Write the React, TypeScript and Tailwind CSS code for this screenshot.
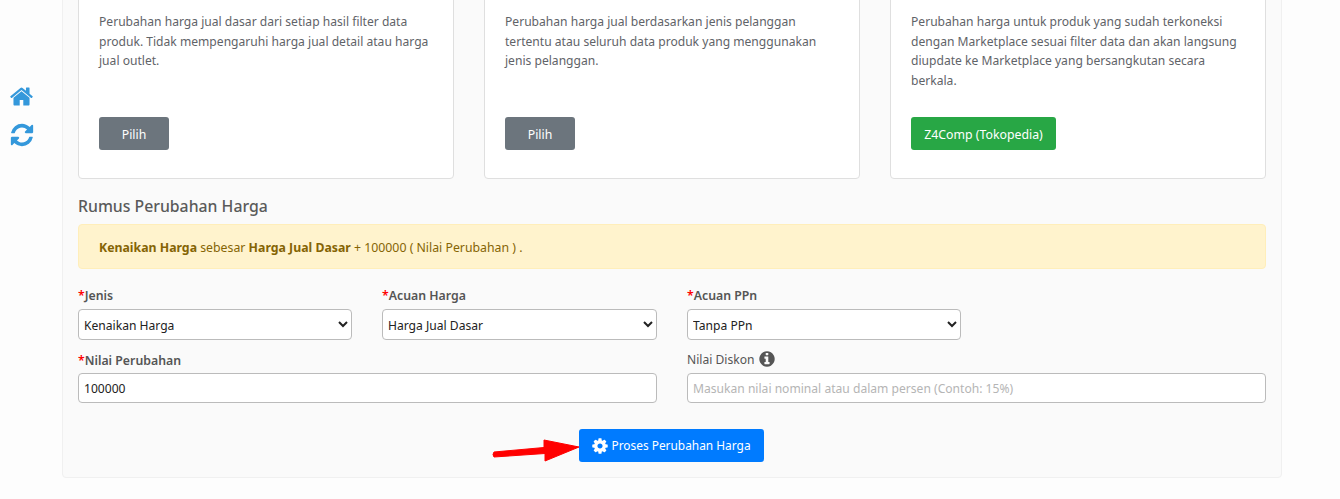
import React from "react";

const font = "font-['Noto_Sans',sans-serif]";

function Home() {
  return (
    <svg width="25" height="25" viewBox="0 0 1792 1792" fill="currentColor">
      <path d="M1472 992v480q0 26-19 45t-45 19h-384v-384h-256v384h-384q-26 0-45-19t-19-45v-480q0-1 .5-3t.5-3l575-474 575 474q1 2 1 6zm223-69l-62 74q-8 9-21 11h-3q-13 0-21-7l-692-577-692 577q-12 8-24 7-13-2-21-11l-62-74q-8-10-7-23.500t11-21.500l719-599q32-26 76-26t76 26l244 204v-195q0-14 9-23t23-9h192q14 0 23 9t9 23v408l219 182q10 8 11 21.500t-7 23.500z" />
    </svg>
  );
}

function Refresh() {
  return (
    <svg width="26" height="26" viewBox="0 0 1792 1792" fill="currentColor">
      <path d="M1639 1056q0 5-1 7-64 268-268 434.500t-478 166.500q-146 0-282.500-55t-243.500-157l-129 129q-19 19-45 19t-45-19-19-45v-448q0-26 19-45t45-19h448q26 0 45 19t19 45-19 45l-137 137q71 66 161 102t187 36q134 0 250-65t186-179q11-17 53-117 8-23 30-23h192q13 0 22.500 9.500t9.500 22.500zm25-800v448q0 26-19 45t-45 19h-448q-26 0-45-19t-19-45 19-45l138-138q-148-137-349-137-134 0-250 65t-186 179q-11 17-53 117-8 23-30 23h-199q-13 0-22.500-9.500t-9.500-22.500v-7q65-268 270-434.500t480-166.500q146 0 284 55.500t245 156.500l130-129q19-19 45-19t45 19 19 45z" />
    </svg>
  );
}

function Cog() {
  return (
    <svg width="18" height="18" viewBox="0 0 1792 1792" fill="currentColor">
      <path d="M1152 896q0-106-75-181t-181-75-181 75-75 181 75 181 181 75 181-75 75-181zm512-109v222q0 12-8 23t-20 13l-185 28q-19 54-39 91 35 50 107 138 10 12 10 25t-9 23q-27 37-99 108t-94 71q-12 0-26-9l-138-108q-44 23-91 38-16 136-29 186-7 28-36 28h-222q-14 0-24.500-8.500t-11.500-21.500l-28-184q-49-16-90-37l-141 107q-10 9-25 9-14 0-25-11-126-114-165-168-7-10-7-23 0-12 8-23 15-21 51-66.500t54-70.500q-27-50-41-99l-183-27q-13-2-21-12.500t-8-23.500v-222q0-12 8-23t19-13l186-28q14-46 39-92-40-57-107-138-10-12-10-24 0-10 9-23 26-36 98.500-107.500t94.500-71.500q13 0 26 10l138 107q44-23 91-38 16-136 29-186 7-28 36-28h222q14 0 24.500 8.500t11.500 21.500l28 184q49 16 90 37l142-107q9-9 24-9 13 0 25 10 129 119 165 170 7 8 7 22 0 12-8 23-15 21-51 66.500t-54 70.500q26 50 41 98l183 28q13 2 21 12.500t8 23.500z" />
    </svg>
  );
}

function Info() {
  return (
    <svg width="18" height="18" viewBox="0 0 1792 1792" fill="currentColor">
      <path d="M1152 1376v-160q0-14-9-23t-23-9h-96v-512q0-14-9-23t-23-9h-320q-14 0-23 9t-9 23v160q0 14 9 23t23 9h96v320h-96q-14 0-23 9t-9 23v160q0 14 9 23t23 9h448q14 0 23-9t9-23zm-128-896v-160q0-14-9-23t-23-9h-192q-14 0-23 9t-9 23v160q0 14 9 23t23 9h192q14 0 23-9t9-23zm640 416q0 209-103 385.500t-279.500 279.500-385.500 103-385.500-103-279.500-279.500-103-385.500 103-385.500 279.500-279.500 385.500-103 385.500 103 279.500 279.500 103 385.500z" />
    </svg>
  );
}

function Card({ text, btn, green }: { text: string; btn: string; green?: boolean }) {
  return (
    <div className="flex h-[188px] flex-col rounded-[4px] border border-[#dfdfdf] bg-white px-5 pt-5">
      <p className="h-[85px] text-[12.1px] leading-[19.5px] text-[#5f6368]">{text}</p>
      <div className="mt-[20px]">
        <button
          className={
            green
              ? "h-[33px] w-[145px] rounded-[3px] bg-[#28a745] pt-[3px] text-[12.3px] text-white"
              : "h-[33px] w-[70px] rounded-[3px] bg-[#6c757d] pt-[3px] text-[12.3px] text-white"
          }
        >
          {btn}
        </button>
      </div>
    </div>
  );
}

function Label({ text, extra }: { text: string; extra: string }) {
  return (
    <label className={`block h-[21px] text-[12.3px] font-semibold leading-[21px] text-[#555] ${extra}`}>
      <span className="text-[#ff0000]">*</span>
      {text}
    </label>
  );
}

function Sel({ value }: { value: string }) {
  return (
    <select
      defaultValue={value}
      className="h-[31px] w-full rounded-[4px] border border-[#bbb] bg-white px-[1px] pt-[1px] text-[12.1px] text-[#222]"
    >
      <option>{value}</option>
    </select>
  );
}

export default function App() {
  return (
    <div className={`flex h-[499px] w-[1340px] overflow-hidden bg-[#fdfdfd] ${font}`}>
      <div className="flex w-[62px] shrink-0 flex-col items-start gap-[13px] pl-[9px] pt-[84px] text-[#3498db]">
        <Home />
        <Refresh />
      </div>
      <div className="-mt-[20px] h-[498px] w-[1220px] shrink-0 rounded-[4px] border border-[#f0f0f0] bg-[#fafafa] px-[15px] pt-[10px]">
        <div className="grid grid-cols-3 gap-[30px]">
          <Card
            text="Perubahan harga jual dasar dari setiap hasil filter data produk. Tidak mempengaruhi harga jual detail atau harga jual outlet."
            btn="Pilih"
          />
          <Card
            text="Perubahan harga jual berdasarkan jenis pelanggan tertentu atau seluruh data produk yang menggunakan jenis pelanggan."
            btn="Pilih"
          />
          <Card
            text="Perubahan harga untuk produk yang sudah terkoneksi dengan Marketplace sesuai filter data dan akan langsung diupdate ke Marketplace yang bersangkutan secara berkala."
            btn="Z4Comp (Tokopedia)"
            green
          />
        </div>
        <h5 className="mt-[15px] h-[30px] text-[15.8px] font-medium leading-[24px] text-[#5a5a5a]">
          Rumus Perubahan Harga
        </h5>
        <div className="flex h-[45px] items-center rounded-[4px] border border-[#ffeeba] bg-[#fff3cd] px-5 pt-[3px] text-[12.3px] text-[#856404]">
          <span>
            <b className="font-bold">Kenaikan Harga</b> sebesar <b className="font-bold">Harga Jual Dasar</b> + 100000 ( Nilai Perubahan ) .
          </span>
        </div>
        <div className="mt-[16px] grid grid-cols-[274px_275px_274px_1fr] gap-x-[30px]">
          <div>
            <Label text="Jenis" extra="mb-[3px]" />
            <Sel value="Kenaikan Harga" />
          </div>
          <div>
            <Label text="Acuan Harga" extra="mb-[3px]" />
            <Sel value="Harga Jual Dasar" />
          </div>
          <div>
            <Label text="Acuan PPn" extra="mb-[3px]" />
            <Sel value="Tanpa PPn" />
          </div>
        </div>
        <div className="mt-[10px] grid grid-cols-2 gap-x-[30px]">
          <div>
            <Label text="Nilai Perubahan" extra="mb-[2px]" />
            <input
              readOnly
              value="100000"
              className="h-[30px] w-full rounded-[4px] border border-[#bbb] bg-white px-[5px] text-[12.1px] text-[#222]"
            />
          </div>
          <div>
            <label className="mb-[2px] flex h-[21px] items-center gap-[4px] text-[12.1px] text-[#555]">
              Nilai Diskon
              <span className="-mt-[3px]">
                <Info />
              </span>
            </label>
            <input
              readOnly
              placeholder="Masukan nilai nominal atau dalam persen (Contoh: 15%)"
              className="h-[30px] w-full rounded-[4px] border border-[#bbb] bg-white px-[5px] text-[12.1px] placeholder:text-[#b5b5b5]"
            />
          </div>
        </div>
        <div className="mt-[26px] flex justify-center pr-[2px]">
          <div className="relative">
            <svg className="absolute -left-[87px] top-[2px]" width="88" height="32" viewBox="0 0 88 32">
              <path d="M2 21 L52 16.500 L52 9 L87 16 L53 30 L53 22.500 L2 26 Q0 23.500 2 21 Z" fill="#ff0000" stroke="#ff0000" strokeWidth="1" strokeLinejoin="round" />
            </svg>
            <button className="flex h-[33px] w-[185px] items-center justify-center gap-[2px] rounded-[3px] bg-[#007bff] text-[11.9px] text-white">
              <Cog /> Proses Perubahan Harga
            </button>
          </div>
        </div>
      </div>
    </div>
  );
}
